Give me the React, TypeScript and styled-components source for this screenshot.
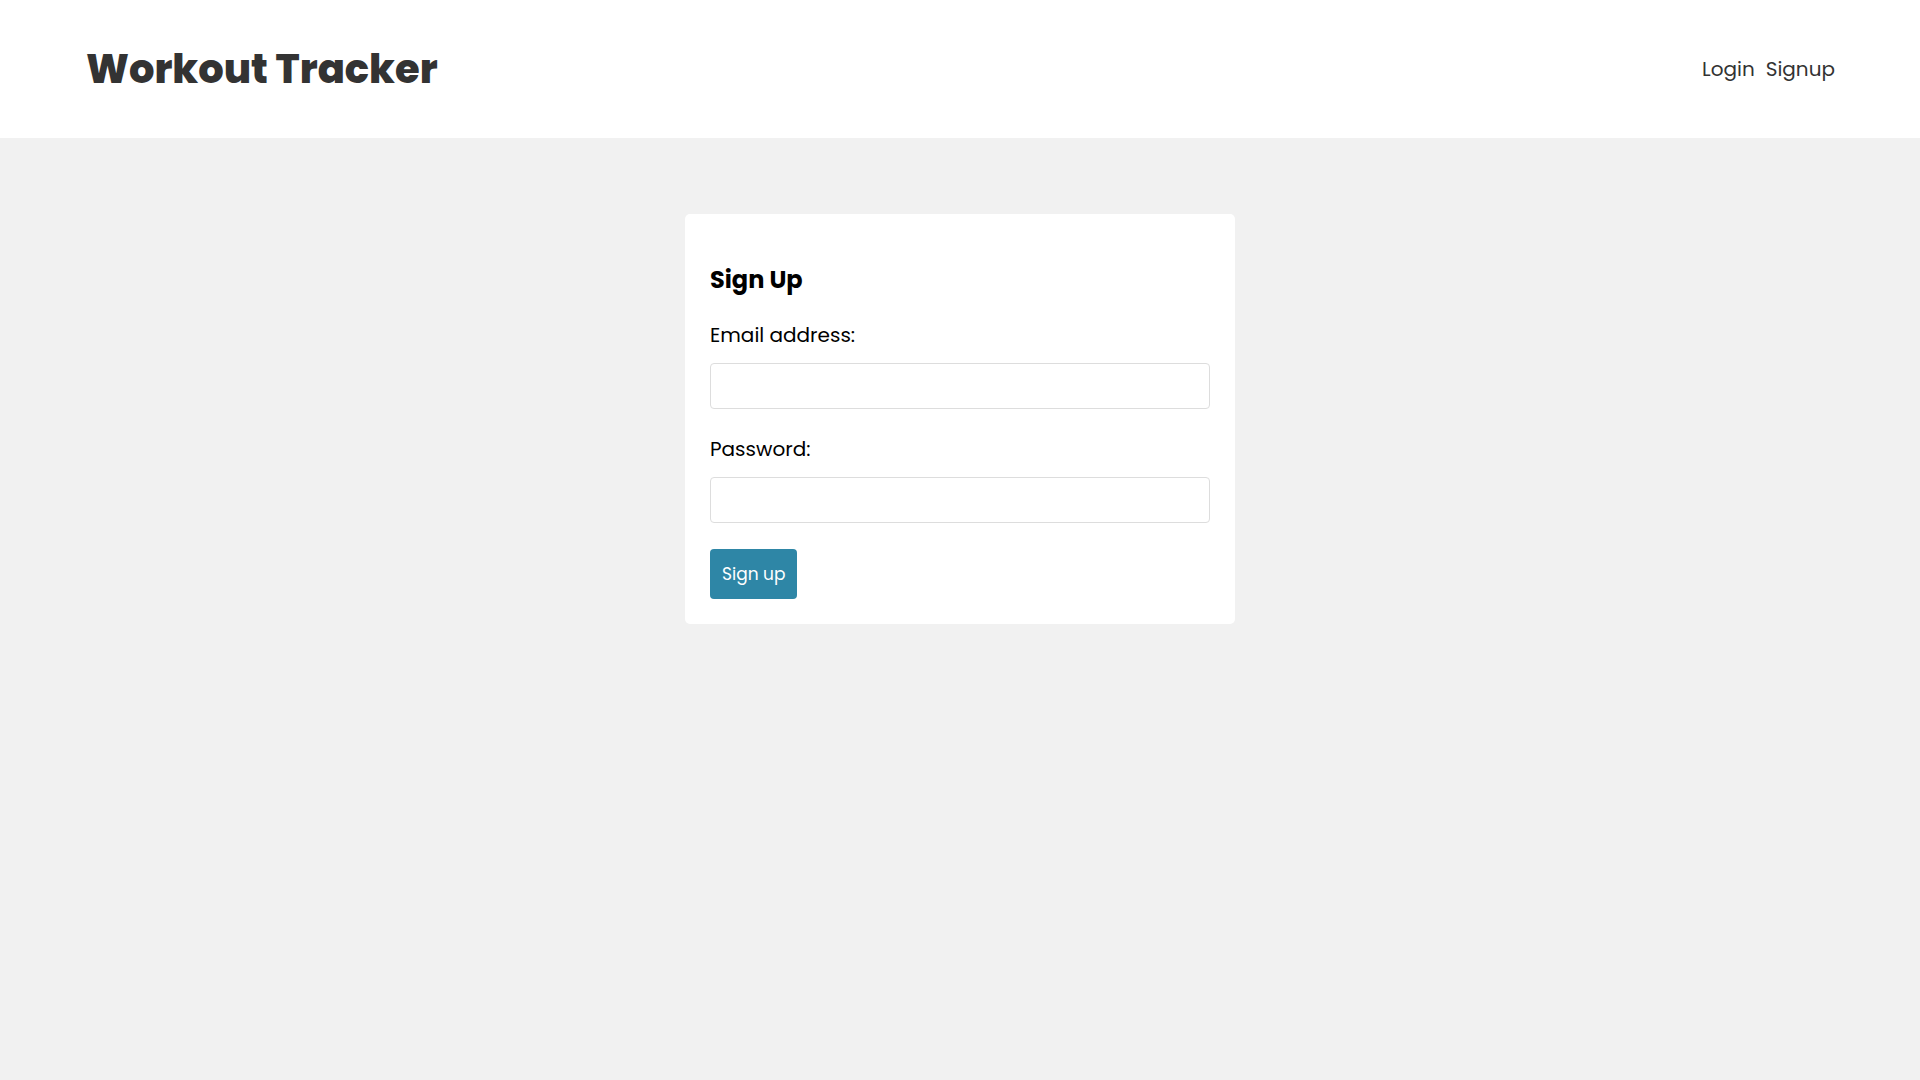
import React from 'react';
import styled, { createGlobalStyle } from 'styled-components';

const GlobalStyle = createGlobalStyle`
    * {
        box-sizing: border-box;
    }
    body {
        margin: 0;
        background: #f1f1f1;
        font-family: "Poppins", "Open Sans", "Noto Sans", sans-serif;
        color: #333;
    }
`;

const Header = styled.header`
    height: 138px;
    background: #fff;
    padding: 0 85px 0 86px;
    display: flex;
    justify-content: space-between;
    align-items: center;
`;

const Title = styled.h1`
    margin: 0;
    font-size: 40px;
    font-weight: 800;
    line-height: 1;
    color: #333;
`;

const Nav = styled.nav`
    display: flex;
    gap: 11px;
`;

const NavLink = styled.a`
    font-size: 20px;
    color: #333;
    text-decoration: none;
    cursor: pointer;
`;

const Page = styled.main`
    padding-top: 76px;
`;

const Card = styled.form`
    width: 550px;
    margin: 0 auto;
    padding: 25px 25px 25px;
    background: #fff;
    border-radius: 5px;
    display: flex;
    flex-direction: column;
    align-items: flex-start;
`;

const Heading = styled.h3`
    margin: 26px 0 0;
    font-size: 24px;
    font-weight: 700;
    line-height: 30px;
    color: #000;
`;

const Label = styled.label<{ $top: number }>`
    margin-top: ${p => p.$top}px;
    font-size: 20px;
    line-height: 30px;
    color: #000;
`;

const Input = styled.input`
    width: 100%;
    height: 46px;
    margin-top: 13px;
    padding: 10px;
    border: 1px solid #ddd;
    border-radius: 4px;
    background: #fff;
    font: inherit;
`;

const Button = styled.button`
    margin-top: 26px;
    height: 50px;
    padding: 0 12px;
    border: none;
    border-radius: 4px;
    background: #2e86a6;
    color: #fff;
    font-family: inherit;
    font-size: 17px;
    cursor: pointer;
`;

const App = () => {
    return (
        <>
            <GlobalStyle />
            <Header>
                <Title>Workout Tracker</Title>
                <Nav>
                    <NavLink>Login</NavLink>
                    <NavLink>Signup</NavLink>
                </Nav>
            </Header>
            <Page>
                <Card onSubmit={e => e.preventDefault()}>
                    <Heading>Sign Up</Heading>
                    <Label $top={25}>Email address:</Label>
                    <Input type="email" />
                    <Label $top={25}>Password:</Label>
                    <Input type="password" />
                    <Button type="submit">Sign up</Button>
                </Card>
            </Page>
        </>
    );
};

export default App;
